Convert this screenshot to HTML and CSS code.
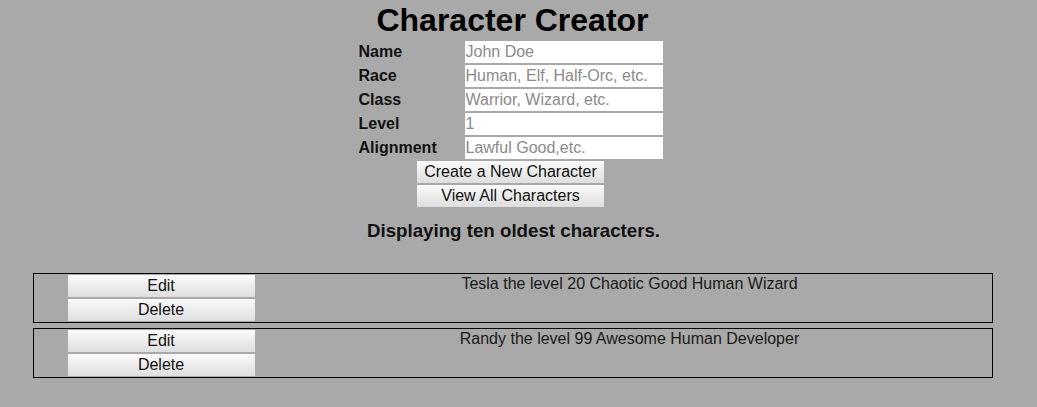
FILE: index.html
```html
<!DOCTYPE html>
<html>
<head>
<meta charset="utf-8">
<title>Character Creator</title>
<link rel="stylesheet" href="styles.css">
</head>
<body>
<div class="page">
  <h1 class="title">Character Creator</h1>
  <form class="form">
    <label class="label" for="name">Name</label>
    <input class="field" id="name" placeholder="John Doe">
    <label class="label" for="race">Race</label>
    <input class="field" id="race" placeholder="Human, Elf, Half-Orc, etc.">
    <label class="label" for="cls">Class</label>
    <input class="field" id="cls" placeholder="Warrior, Wizard, etc.">
    <label class="label" for="level">Level</label>
    <input class="field" id="level" placeholder="1">
    <label class="label" for="align">Alignment</label>
    <input class="field" id="align" placeholder="Lawful Good,etc.">
  </form>
  <div class="actions">
    <button class="btn" type="button">Create a New Character</button>
    <button class="btn" type="button">View All Characters</button>
  </div>
  <h2 class="subtitle">Displaying ten oldest characters.</h2>
  <div class="list">
    <div class="row">
      <div class="row-buttons">
        <button class="btn" type="button">Edit</button>
        <button class="btn" type="button">Delete</button>
      </div>
      <div class="row-text">Tesla the level 20 Chaotic Good Human Wizard</div>
    </div>
    <div class="row">
      <div class="row-buttons">
        <button class="btn" type="button">Edit</button>
        <button class="btn" type="button">Delete</button>
      </div>
      <div class="row-text">Randy the level 99 Awesome Human Developer</div>
    </div>
  </div>
</div>
</body>
</html>
```
FILE: styles.css
```css
html, body {
  margin: 0;
  padding: 0;
  background: #a9a9a9;
  font-family: "Liberation Sans", Arial, sans-serif;
  color: #000;
}
.page {
  width: 1025px;
  display: flex;
  flex-direction: column;
  align-items: center;
}
.title {
  margin: 0;
  padding-top: 2px;
  font-size: 32px;
  line-height: 37px;
  font-weight: bold;
  color: #000;
}
.form {
  display: grid;
  grid-template-columns: 106px 198px;
  row-gap: 2px;
  margin: 2px 4px 0 0;
}
.label {
  font-size: 16px;
  font-weight: bold;
  line-height: 22px;
  color: #111;
}
.field {
  box-sizing: border-box;
  width: 198px;
  height: 22px;
  border: none;
  padding: 0 1px;
  margin: 0;
  background: #fff;
  font-family: "Liberation Sans", Arial, sans-serif;
  font-size: 16px;
  color: #222;
  outline: none;
}
.field::placeholder {
  color: #8a8a8a;
}
.actions {
  display: flex;
  flex-direction: column;
  gap: 2px;
  margin: 2px 4px 0 0;
}
.btn {
  box-sizing: border-box;
  width: 187px;
  height: 22px;
  border: none;
  padding: 0;
  margin: 0;
  background: linear-gradient(#fafafa, #dedede);
  font-family: "Liberation Sans", Arial, sans-serif;
  font-size: 16px;
  color: #111;
}
.subtitle {
  margin: 12px 0 0 2px;
  font-size: 18.72px;
  line-height: 24px;
  font-weight: bold;
  color: #111;
}
.list {
  margin-top: 30px;
  display: flex;
  flex-direction: column;
  gap: 5px;
}
.row {
  box-sizing: border-box;
  width: 960px;
  border: 1px solid #000;
  display: flex;
  padding: 1px 0 0 34px;
  height: 50px;
}
.row-buttons {
  display: flex;
  flex-direction: column;
  gap: 2px;
}
.row-text {
  flex: 1;
  margin-left: 13px;
  text-align: center;
  font-size: 16px;
  line-height: 18px;
  color: #1a1a1a;
}
```
